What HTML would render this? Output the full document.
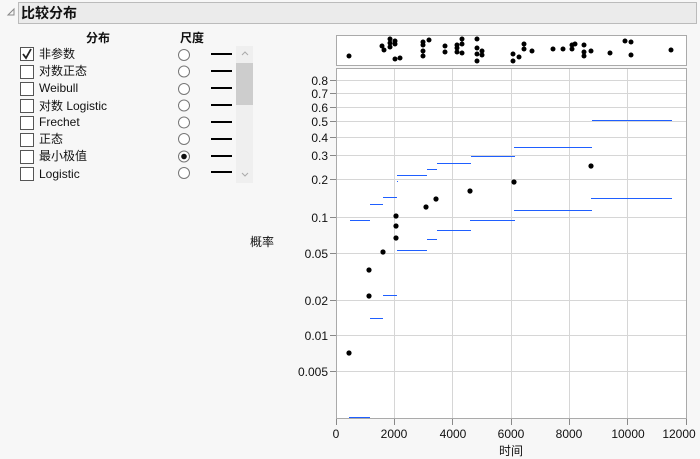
<!DOCTYPE html>
<html><head><meta charset="utf-8"><style>
body{margin:0;background:#f7f7f7;width:700px;height:459px;overflow:hidden}
svg{display:block}
text{font-family:"Liberation Sans","Noto Sans CJK SC",sans-serif;font-size:12px;fill:#111}
</style></head><body>
<svg width="700" height="459" viewBox="0 0 700 459">
<rect x="0" y="0" width="700" height="459" fill="#f7f7f7"/>
<path d="M8 15 L14 9 L14 15 Z" fill="none" stroke="#888" stroke-width="1"/>
<rect x="18.5" y="2.5" width="678" height="21" fill="#ebebeb" stroke="#bbb"/>
<text x="21" y="18" style="font-size:14px;font-weight:bold;font-family:'Noto Sans CJK SC',sans-serif">比较分布</text>
<text x="86" y="42" style="font-weight:bold;font-family:'Noto Sans CJK SC',sans-serif">分布</text>
<text x="180" y="42" style="font-weight:bold;font-family:'Noto Sans CJK SC',sans-serif">尺度</text>
<g fill="#fff" stroke="#555">
<rect x="20.5" y="47.5" width="13" height="13"/>
<rect x="20.5" y="65.5" width="13" height="13"/>
<rect x="20.5" y="82.5" width="13" height="13"/>
<rect x="20.5" y="99.5" width="13" height="13"/>
<rect x="20.5" y="116.5" width="13" height="13"/>
<rect x="20.5" y="133.5" width="13" height="13"/>
<rect x="20.5" y="150.5" width="13" height="13"/>
<rect x="20.5" y="167.5" width="13" height="13"/>
</g>
<path d="M23 54 L26 58 L31 49" fill="none" stroke="#222" stroke-width="1.8"/>
<g style="font-size:12px">
<text x="39" y="58">非参数</text>
<text x="39" y="75">对数正态</text>
<text x="39" y="92">Weibull</text>
<text x="39" y="110">对数 Logistic</text>
<text x="39" y="126">Frechet</text>
<text x="39" y="143">正态</text>
<text x="39" y="160">最小极值</text>
<text x="39" y="178">Logistic</text>
</g>
<g fill="#fff" stroke="#777">
<circle cx="184" cy="55" r="5.5"/><circle cx="184" cy="71.5" r="5.5"/><circle cx="184" cy="89" r="5.5"/><circle cx="184" cy="105.5" r="5.5"/><circle cx="184" cy="122.5" r="5.5"/><circle cx="184" cy="139" r="5.5"/><circle cx="184" cy="156.5" r="5.5"/><circle cx="184" cy="173" r="5.5"/>
</g>
<circle cx="184" cy="156.5" r="2.8" fill="#111"/>
<g stroke="#000" stroke-width="2">
<path d="M211 54H232M211 71H232M211 88H232M211 105H232M211 122H232M211 139H232M211 156H232M211 172H232"/>
</g>
<rect x="236" y="46" width="17" height="137" fill="#efefef"/>
<rect x="236" y="63" width="17" height="42" fill="#cdcdcd"/>
<path d="M242 55 L245 52 L248 55" fill="none" stroke="#aaa"/>
<path d="M242 173 L245 176 L248 173" fill="none" stroke="#aaa"/>
<rect x="336.5" y="35.5" width="350" height="30" fill="#fff" stroke="#aaa"/>
<g fill="#000">
<circle cx="349" cy="56" r="2.5"/><circle cx="382" cy="46" r="2.5"/><circle cx="384" cy="50" r="2.5"/><circle cx="390" cy="39" r="2.5"/><circle cx="390" cy="43" r="2.5"/><circle cx="390" cy="47" r="2.5"/><circle cx="395" cy="41" r="2.5"/><circle cx="395" cy="44" r="2.5"/><circle cx="395" cy="59" r="2.5"/><circle cx="400" cy="58" r="2.5"/><circle cx="423" cy="42" r="2.5"/><circle cx="423" cy="45" r="2.5"/><circle cx="423" cy="51" r="2.5"/><circle cx="423" cy="56" r="2.5"/><circle cx="429" cy="40" r="2.5"/><circle cx="445" cy="46" r="2.5"/><circle cx="445" cy="52" r="2.5"/><circle cx="457" cy="45" r="2.5"/><circle cx="457" cy="48" r="2.5"/><circle cx="457" cy="52" r="2.5"/><circle cx="462" cy="39" r="2.5"/><circle cx="462" cy="44" r="2.5"/><circle cx="462" cy="53" r="2.5"/><circle cx="477" cy="39" r="2.5"/><circle cx="477" cy="48" r="2.5"/><circle cx="477" cy="54" r="2.5"/><circle cx="477" cy="61" r="2.5"/><circle cx="482" cy="51" r="2.5"/><circle cx="482" cy="55" r="2.5"/><circle cx="513" cy="54" r="2.5"/><circle cx="513" cy="61" r="2.5"/><circle cx="519" cy="57" r="2.5"/><circle cx="524" cy="44" r="2.5"/><circle cx="524" cy="49" r="2.5"/><circle cx="532" cy="51" r="2.5"/><circle cx="553" cy="49" r="2.5"/><circle cx="563" cy="49" r="2.5"/><circle cx="572" cy="45" r="2.5"/><circle cx="572" cy="49" r="2.5"/><circle cx="575" cy="44" r="2.5"/><circle cx="584" cy="45" r="2.5"/><circle cx="584" cy="52" r="2.5"/><circle cx="584" cy="56" r="2.5"/><circle cx="591" cy="51" r="2.5"/><circle cx="610" cy="53" r="2.5"/><circle cx="625" cy="41" r="2.5"/><circle cx="631" cy="42" r="2.5"/><circle cx="631" cy="55" r="2.5"/><circle cx="671" cy="50" r="2.5"/>
</g>
<rect x="336.5" y="68.5" width="350" height="350" fill="#fff"/>
<g stroke="#d6d6d6" stroke-width="1">
<path d="M394.5 69V418M452.5 69V418M511.5 69V418M569.5 69V418M627.5 69V418"/>
<path d="M337 80.5H686M337 93.5H686M337 107.5H686M337 121.5H686M337 137.5H686M337 155.5H686M337 179.5H686M337 217.5H686M337 253.5H686M337 300.5H686M337 335.5H686M337 371.5H686"/>
</g>
<rect x="336.5" y="68.5" width="350" height="350" fill="none" stroke="#aaa"/>
<g stroke="#888">
<path d="M330 80.5H336M330 93.5H336M330 107.5H336M330 121.5H336M330 137.5H336M330 155.5H336M330 179.5H336M330 217.5H336M330 253.5H336M330 300.5H336M330 335.5H336M330 371.5H336"/>
<path d="M336.5 419V425M394.5 419V425M452.5 419V425M511.5 419V425M569.5 419V425M627.5 419V425M686.5 419V425"/>
</g>
<g text-anchor="end" style="font-size:12px">
<text x="328" y="85">0.8</text><text x="328" y="98">0.7</text><text x="328" y="112">0.6</text><text x="328" y="126">0.5</text><text x="328" y="142">0.4</text><text x="328" y="160">0.3</text><text x="328" y="184">0.2</text><text x="328" y="222">0.1</text><text x="328" y="258">0.05</text><text x="328" y="305">0.02</text><text x="328" y="340">0.01</text><text x="328" y="376">0.005</text>
</g>
<g text-anchor="middle" style="font-size:12px">
<text x="336" y="438">0</text><text x="394" y="438">2000</text><text x="453" y="438">4000</text><text x="511" y="438">6000</text><text x="569" y="438">8000</text><text x="628" y="438">10000</text><text x="679" y="438">12000</text>
</g>
<text x="511" y="455" text-anchor="middle" style="font-size:12px">时间</text>
<text x="250" y="246" style="font-size:12px">概率</text>
<g stroke="#1f5fff" stroke-width="1">
<path d="M350 220.5H370M370 204.5H383M383 197.5H397M397 181.5H398M397 175.5H427M427 169.5H437M437 163.5H471M471 156.5H515M514 147.5H592M592 120.5H672M591 198.5H672M514 210.5H592M470 220.5H515M437 230.5H471M427 239.5H437M397 250.5H427M383 295.5H397M370 318.5H383M349 417.5H370"/>
</g>
<g fill="#000">
<circle cx="396" cy="216" r="2.6"/><circle cx="396" cy="226" r="2.6"/><circle cx="426" cy="207" r="2.6"/><circle cx="436" cy="199" r="2.6"/><circle cx="470" cy="191" r="2.6"/><circle cx="514" cy="182" r="2.6"/><circle cx="591" cy="166" r="2.6"/><circle cx="396" cy="238" r="2.6"/><circle cx="383" cy="252" r="2.6"/><circle cx="369" cy="270" r="2.6"/><circle cx="369" cy="296" r="2.6"/><circle cx="349" cy="353" r="2.6"/>
</g>
</svg>
</body></html>
